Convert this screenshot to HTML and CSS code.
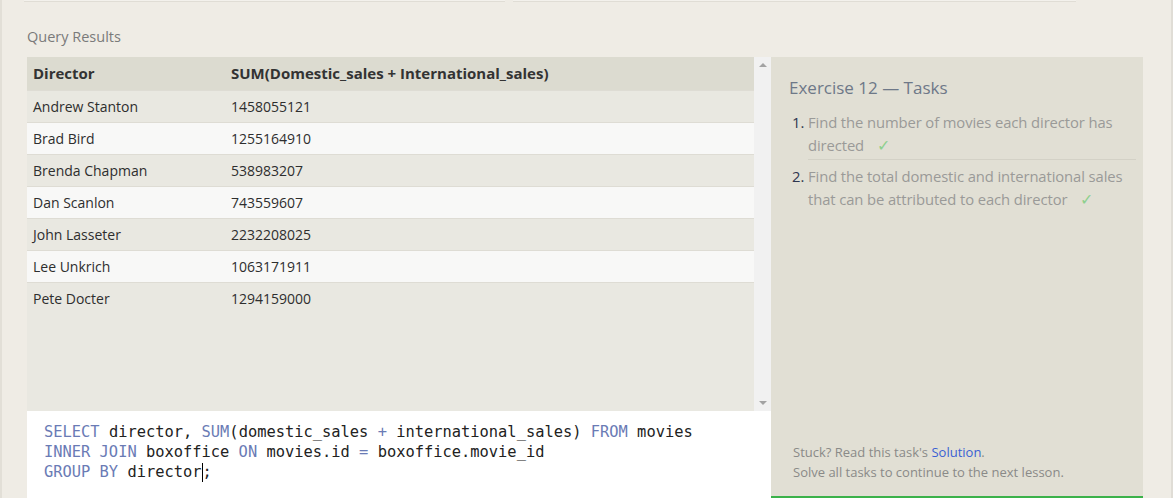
FILE: index.html
```html
<!DOCTYPE html>
<html>
<head>
<meta charset="utf-8">
<title>Query Results</title>
<link rel="stylesheet" href="styles.css">
</head>
<body>
<div class="page">
  <div class="top-edge">
    <div class="edge-box edge-a"></div>
    <div class="edge-box edge-b"></div>
  </div>
  <div class="section-title">Query Results</div>
  <div class="panel">
    <div class="left">
      <div class="results">
        <div class="table-wrap">
          <table class="results-table">
            <thead>
              <tr><th class="col-a">Director</th><th>SUM(Domestic_sales + International_sales)</th></tr>
            </thead>
            <tbody>
              <tr><td>Andrew Stanton</td><td>1458055121</td></tr>
              <tr><td>Brad Bird</td><td>1255164910</td></tr>
              <tr><td>Brenda Chapman</td><td>538983207</td></tr>
              <tr><td>Dan Scanlon</td><td>743559607</td></tr>
              <tr><td>John Lasseter</td><td>2232208025</td></tr>
              <tr><td>Lee Unkrich</td><td>1063171911</td></tr>
              <tr><td>Pete Docter</td><td>1294159000</td></tr>
            </tbody>
          </table>
        </div>
        <div class="scrollbar">
          <span class="arrow up"></span>
          <span class="arrow down"></span>
        </div>
      </div>
      <div class="editor">
        <div class="code-line"><span class="kw">SELECT</span> director, <span class="kw">SUM</span>(domestic_sales <span class="kw">+</span> international_sales) <span class="kw">FROM</span> movies</div>
        <div class="code-line"><span class="kw">INNER JOIN</span> boxoffice <span class="kw">ON</span> movies.id <span class="kw">=</span> boxoffice.movie_id</div>
        <div class="code-line"><span class="kw">GROUP BY</span> director<span class="cursor"></span>;</div>
      </div>
    </div>
    <div class="right">
      <div class="tasks-title">Exercise 12 — Tasks</div>
      <ol class="tasks">
        <li><span class="num">1.</span><span class="task-text">Find the number of movies each director has directed <span class="check">✓</span></span></li>
        <li><span class="num">2.</span><span class="task-text">Find the total domestic and international sales that can be attributed to each director <span class="check">✓</span></span></li>
      </ol>
      <div class="spacer"></div>
      <div class="help">
        <div>Stuck? Read this task's <span class="link">Solution</span>.</div>
        <div>Solve all tasks to continue to the next lesson.</div>
      </div>
    </div>
  </div>
</div>
</body>
</html>
```

FILE: styles.css
```css
html, body {
  margin: 0;
  padding: 0;
}
body {
  background: #efece5;
  font-family: "Open Sans", "Noto Sans", "Liberation Sans", sans-serif;
  overflow: hidden;
}
.page {
  height: 498px;
  border-left: 2px solid #e2dfd7;
  border-right: 2px solid #e0ddd6;
  box-sizing: border-box;
  overflow: hidden;
}
.top-edge {
  display: flex;
  height: 2px;
  padding-left: 22px;
  gap: 8px;
}
.edge-box {
  height: 1px;
  border-bottom: 1px solid #e0ddd5;
  background: #f3f1ec;
}
.edge-a { width: 481px; }
.edge-b { width: 563px; }
.section-title {
  margin-top: 25px;
  padding-left: 25px;
  font-size: 14.5px;
  line-height: 20px;
  color: #7a7a7a;
}
.panel {
  display: flex;
  margin-top: 10px;
  margin-left: 25px;
  width: 1116px;
  height: 441px;
}
.left {
  width: 744px;
  display: flex;
  flex-direction: column;
}
.results {
  height: 354px;
  flex-shrink: 0;
  display: flex;
  background: #e9e8e1;
}
.table-wrap {
  flex: 1;
}
.results-table {
  width: 100%;
  border-collapse: collapse;
  font-size: 14px;
  color: #2e2e2e;
}
.results-table th {
  background: #dcdbd0;
  text-align: left;
  font-weight: 700;
  font-size: 15px;
  height: 33px;
  padding: 0 6px;
  box-sizing: border-box;
  color: #333;
}
.results-table th.col-a { width: 198px; }
.results-table td {
  height: 31px;
  padding: 0 6px;
  border-top: 1px solid #dedcd4;
}
.results-table tbody tr:nth-child(odd) td { background: #e9e8e1; }
.results-table tbody tr:nth-child(even) td { background: #f8f8f7; }
.scrollbar {
  width: 17px;
  background: #f1f1f1;
  display: flex;
  flex-direction: column;
  justify-content: space-between;
  align-items: center;
  padding: 6px 0;
  box-sizing: border-box;
}
.arrow {
  width: 0;
  height: 0;
  border-left: 4px solid transparent;
  border-right: 4px solid transparent;
}
.arrow.up { border-bottom: 4px solid #a3a3a3; }
.arrow.down { border-top: 4px solid #a3a3a3; }
.editor {
  flex: 1;
  background: #ffffff;
  padding: 11px 0 0 17px;
  font-family: "DejaVu Sans Mono", "Liberation Mono", monospace;
  font-size: 15.4px;
  line-height: 20px;
  color: #222;
}
.code-line { white-space: pre; height: 20px; }
.kw { color: #6a7bb5; }
.cursor {
  display: inline-block;
  width: 1px;
  height: 19px;
  background: #000;
  vertical-align: -5px;
}
.right {
  width: 372px;
  background: #e1dfd4;
  border-bottom: 2px solid #3bb24a;
  box-sizing: border-box;
  display: flex;
  flex-direction: column;
  padding: 19px 4px 14px 18px;
}
.tasks-title {
  font-size: 17px;
  line-height: 24px;
  color: #6e7888;
}
.tasks {
  list-style: none;
  margin: 11px 0 0 0;
  padding: 0;
}
.tasks li {
  display: flex;
  font-size: 14.8px;
  line-height: 23px;
}
.tasks li + li {
  border-top: 1px solid #d3d1c6;
  margin-top: 2px;
  padding-top: 5px;
  margin-left: 19px;
  margin-right: 3px;
}
.tasks li + li .num { margin-left: -19px; }
.num {
  width: 19px;
  padding-left: 3px;
  box-sizing: border-box;
  color: #2f3650;
  flex-shrink: 0;
}
.task-text {
  color: #9a9a98;
  letter-spacing: -0.1px;
}
.check {
  color: #8ed08e;
  margin-left: 9px;
  font-size: 16px;
  line-height: 20px;
}
.spacer { flex: 1; }
.help {
  font-size: 13px;
  line-height: 20px;
  color: #8a8a88;
  padding-left: 4px;
}
.link { color: #3a5fd3; }
```
